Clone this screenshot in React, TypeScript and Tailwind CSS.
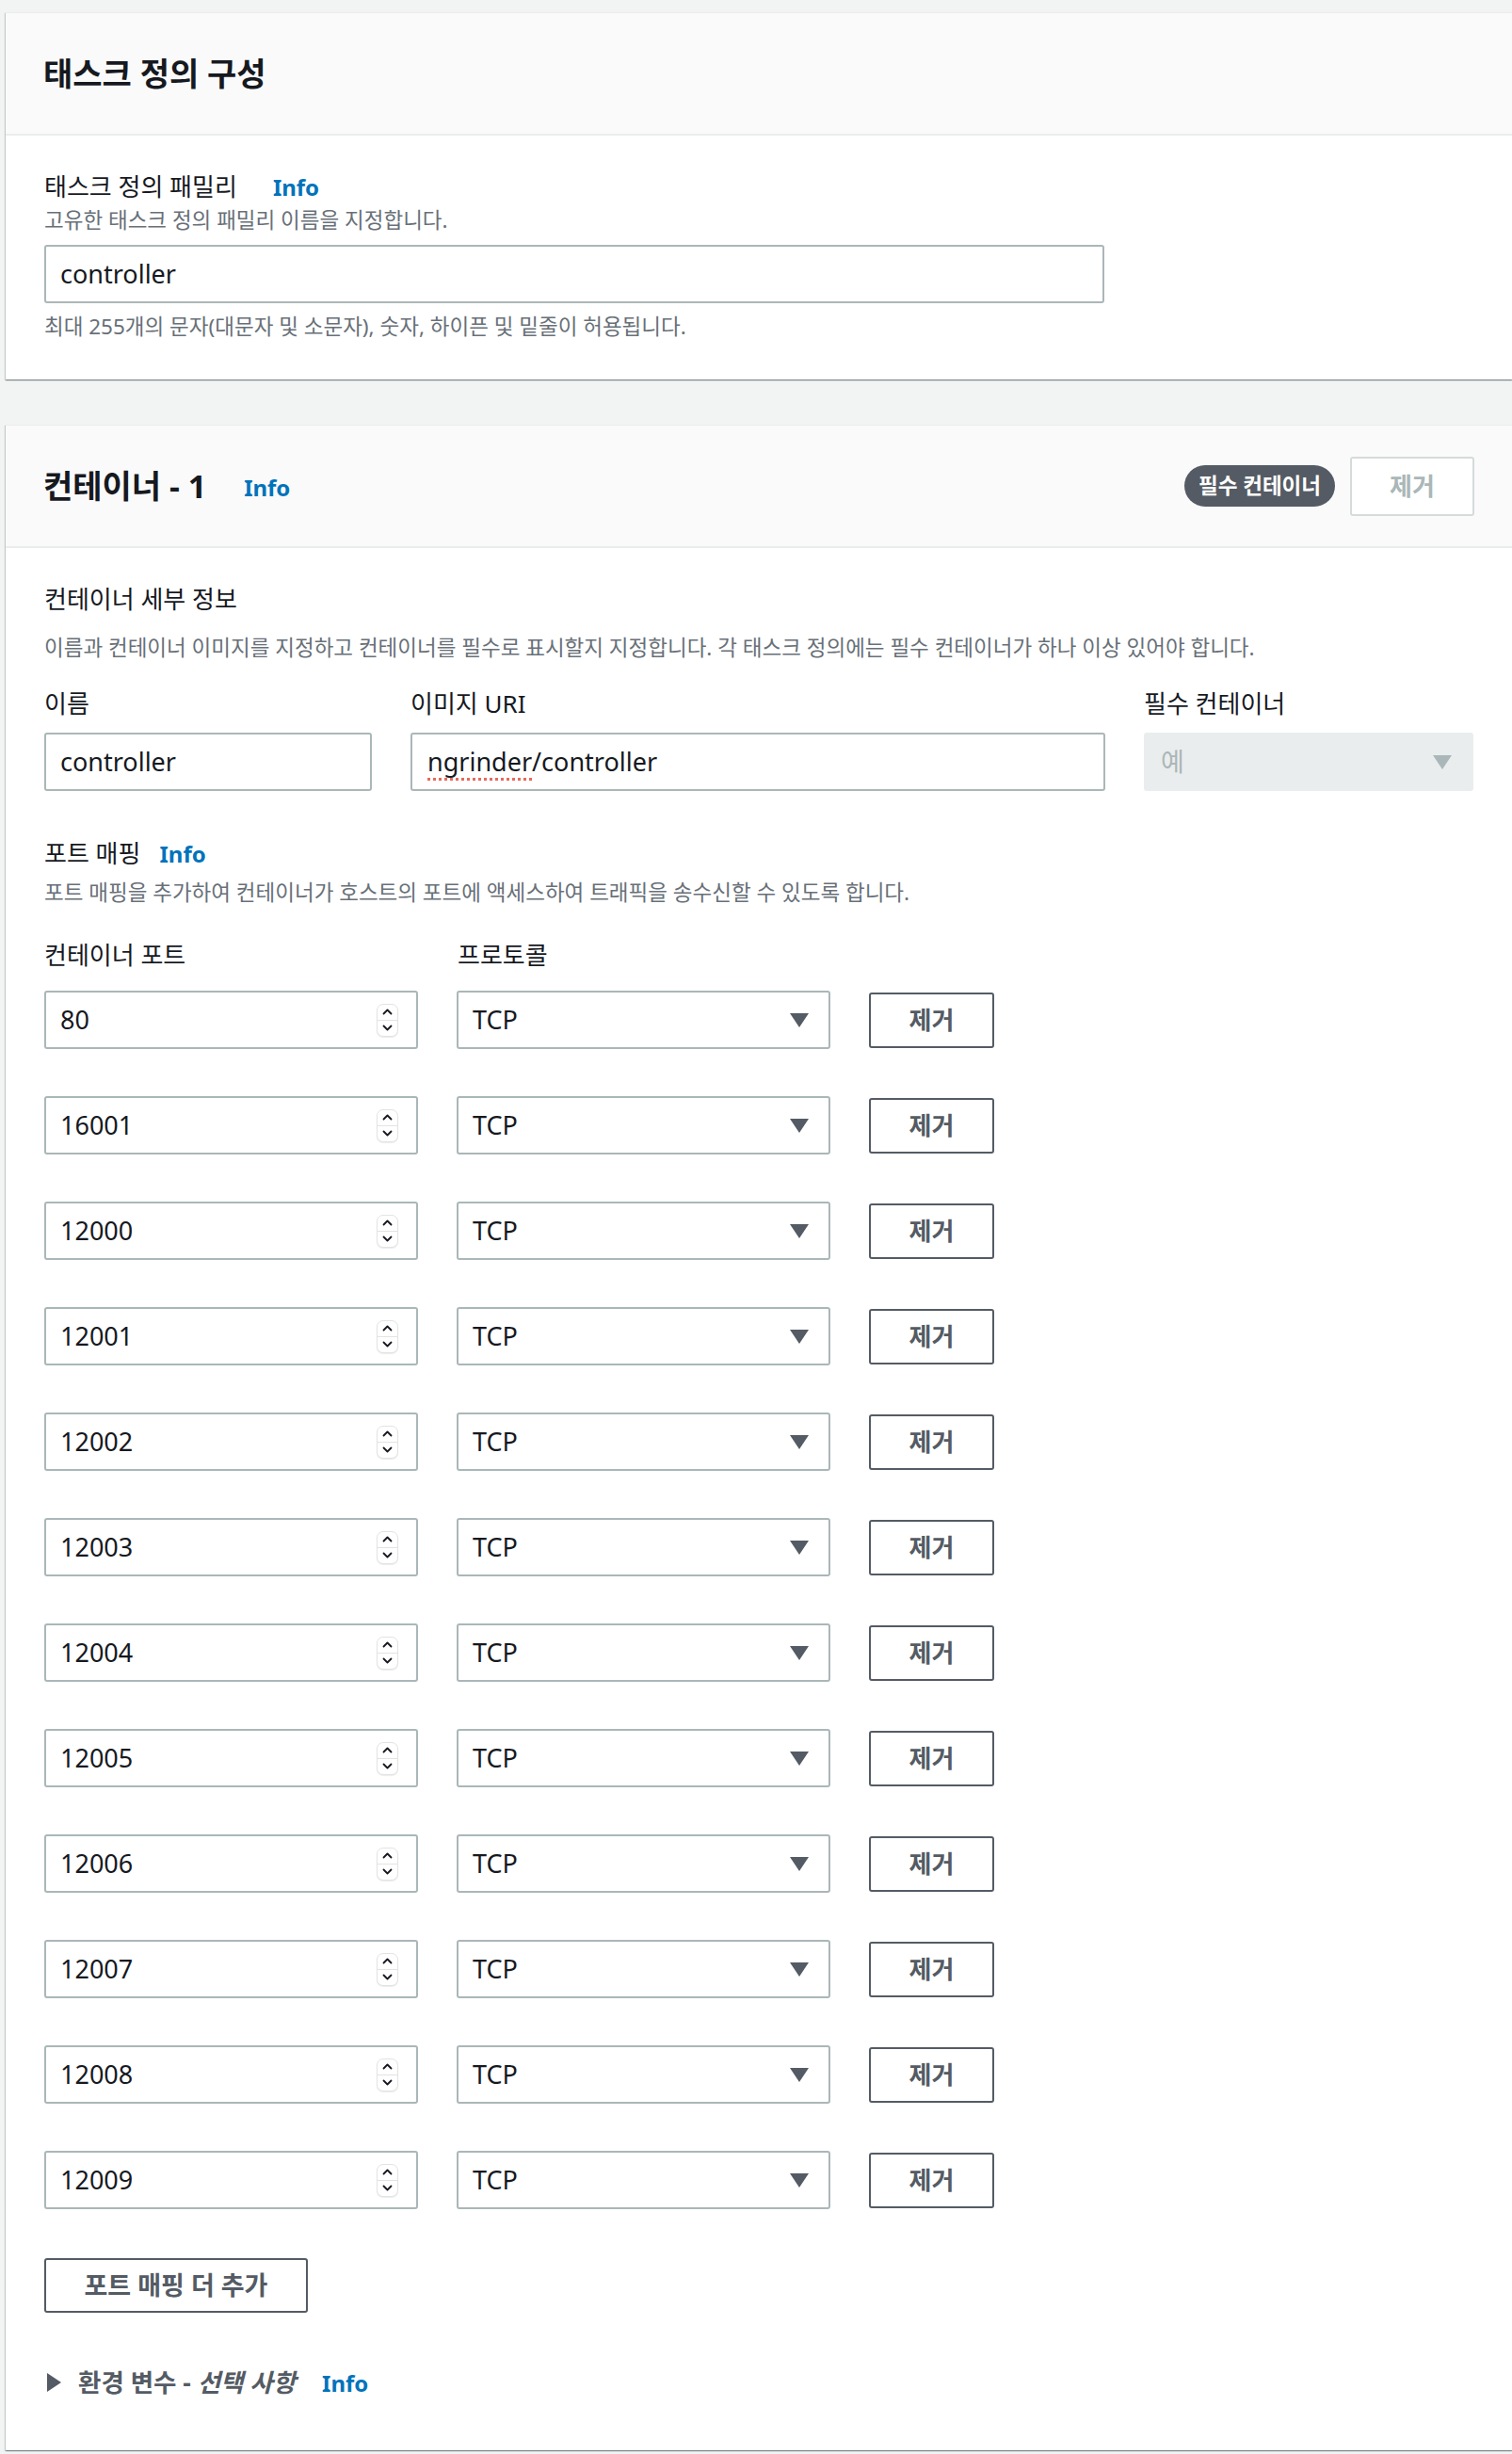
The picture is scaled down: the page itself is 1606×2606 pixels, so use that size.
import React from "react";

const ports = ["80", "16001", "12000", "12001", "12002", "12003", "12004", "12005", "12006", "12007", "12008", "12009"];

const cardShadow =
  "bg-white border-t border-[#eaeded] shadow-[0_1px_1px_0_rgba(0,28,36,0.3),1px_1px_1px_0_rgba(0,28,36,0.15),-1px_1px_1px_0_rgba(0,28,36,0.15)]";

const Info = ({ className = "" }: { className?: string }) => (
  <span className={`text-[24px] font-bold text-[#0073bb] leading-none ${className}`}>Info</span>
);

const Caret = ({ color = "#545b64" }: { color?: string }) => (
  <svg width="20" height="15" viewBox="0 0 20 15">
    <path d="M0 0 H20 L10 15 Z" fill={color} />
  </svg>
);

const Spinner = () => (
  <div className="w-[23px] h-[35px] rounded-[7px] border border-[#e1e4e4] bg-white flex flex-col shadow-[0_1px_1px_rgba(0,0,0,0.08)]">
    <div className="flex-1 flex items-center justify-center border-b border-[#e1e4e4]">
      <svg width="11" height="7" viewBox="0 0 11 7">
        <path d="M1.5 5.5 L5.5 1.5 L9.5 5.5" stroke="#16191f" strokeWidth="1.8" fill="none" strokeLinecap="round" strokeLinejoin="round" />
      </svg>
    </div>
    <div className="flex-1 flex items-center justify-center">
      <svg width="11" height="7" viewBox="0 0 11 7">
        <path d="M1.5 1.5 L5.5 5.5 L9.5 1.5" stroke="#16191f" strokeWidth="1.8" fill="none" strokeLinecap="round" strokeLinejoin="round" />
      </svg>
    </div>
  </div>
);

const Field = ({ children, className = "" }: { children: React.ReactNode; className?: string }) => (
  <div className={`h-[62px] border-2 border-[#aab7b8] rounded-[3px] bg-white flex items-center pl-[15px] text-[27px] text-[#16191f] ${className}`}>
    {children}
  </div>
);

const RemoveButton = () => (
  <button className="h-[59px] w-[133px] border-2 border-[#545b64] rounded-[3px] bg-white text-[26px] font-bold text-[#545b64]">
    제거
  </button>
);

export default function App() {
  return (
    <div className="w-[1606px] min-h-[2606px] overflow-hidden bg-[#f2f3f3] pt-[13px] pl-[6px] font-['Noto_Sans','Noto_Sans_CJK_KR',sans-serif] text-[#16191f]">
      {/* task definition */}
      <section className={cardShadow}>
        <div className="h-[130px] bg-[#fafafa] border-b-2 border-[#eaeded] flex items-center px-[40px]">
          <h2 className="text-[34px] font-bold leading-none">태스크 정의 구성</h2>
        </div>
        <div className="px-[41px] pt-[38px] pb-[42px]">
          <div className="flex items-center leading-[32px] text-[26px]">
            태스크 정의 패밀리
            <Info className="ml-[38px] mt-[2px]" />
          </div>
          <p className="mt-[6px] text-[22.5px] leading-[28px] text-[#687078]">고유한 태스크 정의 패밀리 이름을 지정합니다.</p>
          <Field className="mt-[12px] w-[1126px]">controller</Field>
          <p className="mt-[11px] text-[22.5px] leading-[28px] text-[#687078]">
            최대 255개의 문자(대문자 및 소문자), 숫자, 하이픈 및 밑줄이 허용됩니다.
          </p>
        </div>
      </section>

      {/* container */}
      <section className={`${cardShadow} mt-[48px] min-h-[2151px]`}>
        <div className="h-[130px] bg-[#fafafa] border-b-2 border-[#eaeded] flex items-center px-[40px]">
          <h2 className="text-[34px] font-bold leading-none">컨테이너 - 1</h2>
          <Info className="ml-[40px] mt-[4px]" />
          <div className="ml-auto flex items-center gap-[16px]">
            <span className="h-[44px] px-[15px] rounded-full bg-[#545b64] text-white text-[22.5px] font-bold flex items-center">
              필수 컨테이너
            </span>
            <button className="h-[63px] w-[132px] border-2 border-[#d5dbdb] rounded-[3px] bg-white text-[26px] font-bold text-[#aab7b8]">
              제거
            </button>
          </div>
        </div>

        <div className="px-[41px] pt-[38px] pb-[54px]">
          <div className="text-[26px] leading-[32px]">컨테이너 세부 정보</div>
          <p className="mt-[22px] text-[22.5px] leading-[28px] text-[#687078]">
            이름과 컨테이너 이미지를 지정하고 컨테이너를 필수로 표시할지 지정합니다. 각 태스크 정의에는 필수 컨테이너가 하나 이상 있어야 합니다.
          </p>

          <div className="mt-[29px] grid grid-cols-[348px_738px_350px] gap-x-[41px]">
            <div className="text-[26px] leading-[32px]">이름</div>
            <div className="text-[26px] leading-[32px]">이미지 URI</div>
            <div className="text-[26px] leading-[32px]">필수 컨테이너</div>
            <Field className="mt-[15px]">controller</Field>
            <Field className="mt-[15px] pl-[16px]">
              <span className="underline decoration-dotted decoration-[#e8695c] decoration-[3px] underline-offset-[7px]">ngrinder</span>
              /controller
            </Field>
            <div className="mt-[15px] h-[62px] rounded-[3px] bg-[#eaeded] flex items-center justify-between pl-[18px] pr-[23px] text-[27px] text-[#aab7b8]">
              예
              <Caret color="#aab7b8" />
            </div>
          </div>

          <div className="mt-[50px] flex items-center text-[26px] leading-[32px]">
            포트 매핑
            <Info className="ml-[20px] mt-[2px]" />
          </div>
          <p className="mt-[12px] text-[22.5px] leading-[28px] text-[#687078]">
            포트 매핑을 추가하여 컨테이너가 호스트의 포트에 액세스하여 트래픽을 송수신할 수 있도록 합니다.
          </p>

          <div className="mt-[36px] grid grid-cols-[397px_397px] gap-x-[42px] text-[26px] leading-[32px]">
            <div>컨테이너 포트</div>
            <div>프로토콜</div>
          </div>

          <div className="mt-[22px] flex flex-col gap-[50px]">
            {ports.map((p) => (
              <div key={p} className="flex items-center gap-x-[41px]">
                <Field className="w-[397px] justify-between pr-[19px]">
                  <span>{p}</span>
                  <Spinner />
                </Field>
                <Field className="w-[397px] justify-between pr-[21px]">
                  <span>TCP</span>
                  <Caret />
                </Field>
                <RemoveButton />
              </div>
            ))}
          </div>

          <button className="mt-[52px] h-[58px] w-[280px] border-2 border-[#545b64] rounded-[3px] bg-white text-[27px] font-bold text-[#545b64]">
            포트 매핑 더 추가
          </button>

          <div className="mt-[58px] flex items-center leading-[32px] text-[26.5px] font-bold text-[#545b64]">
            <svg width="15" height="20" viewBox="0 0 15 20" className="ml-[3px]">
              <path d="M0 0 L15 10 L0 20 Z" fill="#545b64" />
            </svg>
            <span className="ml-[18px]">환경 변수 - <i>선택 사항</i></span>
            <Info className="ml-[28px] mt-[2px]" />
          </div>
        </div>
      </section>
    </div>
  );
}
